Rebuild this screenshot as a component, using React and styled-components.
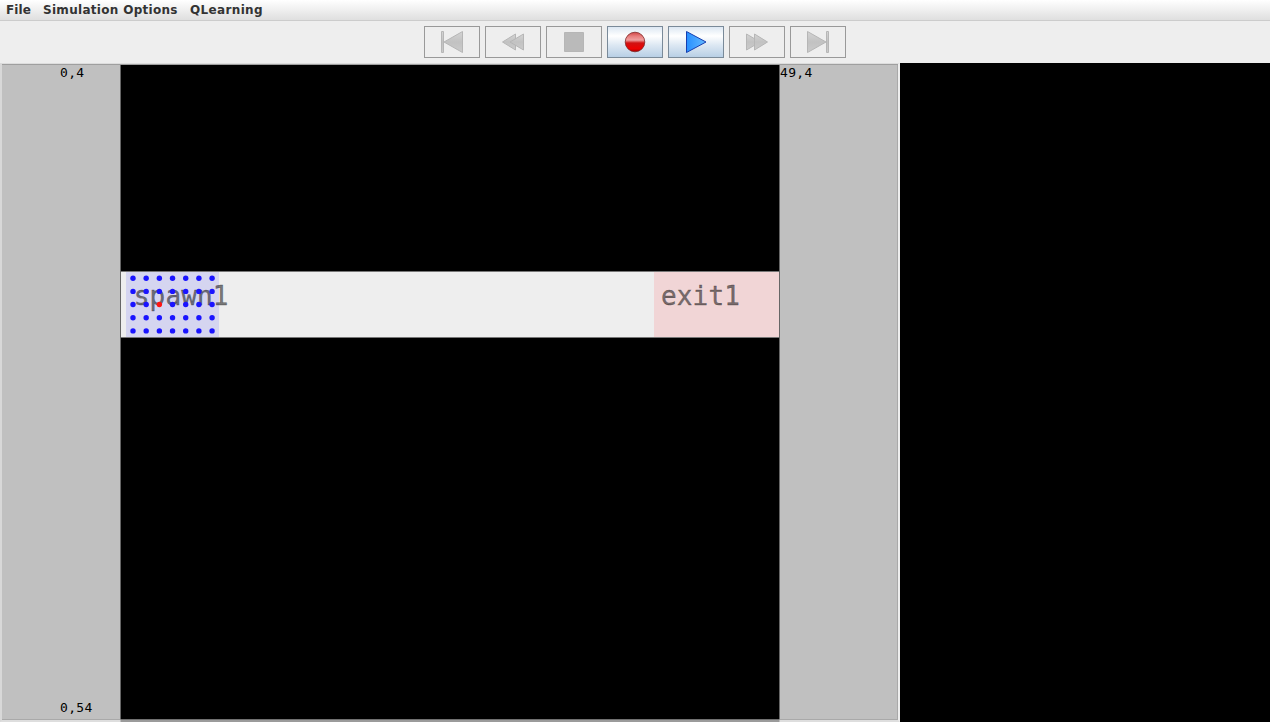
import React from "react";
import styled, { createGlobalStyle } from "styled-components";

const Global = createGlobalStyle`
  * { box-sizing: border-box; }
  body { margin: 0; overflow: hidden; background: #eeeeee; }
`;
const Window = styled.div`
  width: 1270px; height: 722px; display: flex; flex-direction: column;
  font-family: "DejaVu Sans", sans-serif; background: #eeeeee;
`;
const MenuBar = styled.nav`
  height: 21px; flex: none; display: flex; align-items: center; padding: 0 0 1px 6px;
  background: linear-gradient(#ffffff, #dfdfdf); border-bottom: 1px solid #cccccc;
`;
const MenuItem = styled.span`
  width: ${(p) => p.$w}px; white-space: nowrap; color: #333;
  font-size: 12px; line-height: 16px; font-weight: bold; letter-spacing: ${(p) => p.$ls || 0}px;
`;
const Toolbar = styled.div`
  height: 42px; flex: none; display: flex; justify-content: center; gap: 5px; padding-top: 5px;
`;
const Button = styled.button`
  width: 56px; height: 32px; padding: 0; display: flex; align-items: center; justify-content: center;
  border: 1px solid ${(p) => (p.$on ? "#7a8a99" : "#999999")};
  background: ${(p) => (p.$on ? "linear-gradient(#dde8f3 0%, #ffffff 30%, #dde8f3 60%, #b8cfe5 100%)" : "#eeeeee")};
`;
const Content = styled.main`
  flex: 1; display: flex; min-height: 0; background: #000;
`;
const Viewport = styled.section`
  width: 900px; display: flex; flex: none; background: #c0c0c0; position: relative;
`;
const Frame = styled.div`
  position: absolute; inset: 0; pointer-events: none;
  border-style: solid; border-width: 1px 2px 2px;
  border-color: #dddddd #eeeeee rgba(238,238,238,.65) #d8d8d8;
  background-clip: padding-box;
  box-shadow: inset 0 1px #9f9f9f, inset -1px -1px rgba(160,160,160,.7);
`;
const Margin = styled.div`
  width: ${(p) => p.$w}px; flex: none; display: flex; flex-direction: column; justify-content: space-between;
  padding: 2px 0 6px ${(p) => p.$pad}px;
`;
const Coord = styled.span`
  font-family: "DejaVu Sans Mono", monospace; font-size: 13px; line-height: 16px; letter-spacing: .3px; color: #000;
`;
const World = styled.div`
  width: 660px; flex: none; background: #000; padding-top: 208px;
  border: solid #666; border-width: 0 1px;
`;
const Corridor = styled.div`
  height: 67px; display: flex; background: #eeeeee; padding-left: 5px; justify-content: space-between;
  border: solid #777; border-width: 1px 0;
`;
const Zone = styled.div`
  width: ${(p) => p.$w}px; background: ${(p) => p.$bg}; position: relative; padding: 9px 0 0 ${(p) => p.$pad}px;
`;
const ZoneLabel = styled.div`
  font-family: "DejaVu Sans Mono", monospace; font-size: 26px; line-height: 31px; letter-spacing: .15px;
  color: rgba(0,0,0,.5); -webkit-text-stroke: .4px rgba(0,0,0,.5); white-space: nowrap;
`;
const Agents = styled.svg`
  position: absolute; left: 0; top: 0;
`;

function Icon({ kind }) {
  const grey = { fill: "url(#grey)", stroke: "#b6b6b6" };
  return (
    <svg width="30" height="30" viewBox="0 0 30 30">
      <defs>
        <linearGradient id="grey" x2="0" y2="1"><stop stopColor="#d4d4d4" /><stop offset=".5" stopColor="#c2c2c2" /><stop offset="1" stopColor="#cbcbcb" /></linearGradient>
        <linearGradient id="blue"><stop stopColor="#278fff" /><stop offset="1" stopColor="#65baff" /></linearGradient>
        <linearGradient id="red" x2="0" y2="1"><stop stopColor="#cf4444" /><stop offset=".2" stopColor="#e87c7c" /><stop offset=".4" stopColor="#efa0a0" /><stop offset=".55" stopColor="#d01212" /><stop offset=".85" stopColor="#ec0000" /><stop offset="1" stopColor="#a00000" /></linearGradient>
      </defs>
      {kind === "first" && <g {...grey}><path d="M4.5 4.5h2v21h-2z" /><path d="M25.5 4.5v21L7 15z" /></g>}
      {kind === "rewind" && <g {...grey}><path d="M17.5 7v16L4.5 15z" /><path d="M25.5 7v16L12 15z" /></g>}
      {kind === "stop" && <path d="M5.5 5.5h19v19h-19z" fill="#bababa" stroke="#b6b6b6" />}
      {kind === "record" && <circle cx="15" cy="15" r="9.8" fill="url(#red)" stroke="#7d2626" strokeWidth=".8" />}
      {kind === "play" && <path d="M5.5 4.5v21L25 15z" fill="url(#blue)" stroke="#163eb0" />}
      {kind === "forward" && <g {...grey}><path d="M4.5 7v16L18 15z" /><path d="M12.5 7v16L25.5 15z" /></g>}
      {kind === "last" && <g {...grey}><path d="M4.5 4.5v21L23 15z" /><path d="M23.5 4.5h2v21h-2z" /></g>}
    </svg>
  );
}

const controls = ["first", "rewind", "stop", "record", "play", "forward", "last"];
const rows = [0, 1, 2, 3, 4];
const cols = [0, 1, 2, 3, 4, 5, 6];

export default function App() {
  return (
    <Window>
      <Global />
      <MenuBar>
        <MenuItem $w={37} $ls={0.1}>File</MenuItem>
        <MenuItem $w={147} $ls={0.3}>Simulation Options</MenuItem>
        <MenuItem $w={90} $ls={0.35}>QLearning</MenuItem>
      </MenuBar>
      <Toolbar>
        {controls.map((kind) => (
          <Button key={kind} aria-label={kind} $on={kind === "record" || kind === "play"}><Icon kind={kind} /></Button>
        ))}
      </Toolbar>
      <Content>
        <Viewport>
          <Margin $w={120} $pad={60}><Coord>0,4</Coord><Coord>0,54</Coord></Margin>
          <World>
            <Corridor>
              <Zone $w={93} $pad={7.8} $bg="#d5d5f0">
                <ZoneLabel>spawn1</ZoneLabel>
                <Agents width="93" height="65">
                  {rows.map((r) => cols.map((c) => (
                    <circle key={`${r}-${c}`} cx={7 + c * 13.18} cy={6.2 + r * 13.18} r="2.7" fill={r === 2 && c === 2 ? "#ff1414" : "#1a14ff"} />
                  )))}
                </Agents>
              </Zone>
              <Zone $w={125.5} $pad={7.5} $bg="#f1d5d6"><ZoneLabel>exit1</ZoneLabel></Zone>
            </Corridor>
          </World>
          <Margin $w={120} $pad={0}><Coord>49,4</Coord></Margin>
          <Frame />
        </Viewport>
      </Content>
    </Window>
  );
}
